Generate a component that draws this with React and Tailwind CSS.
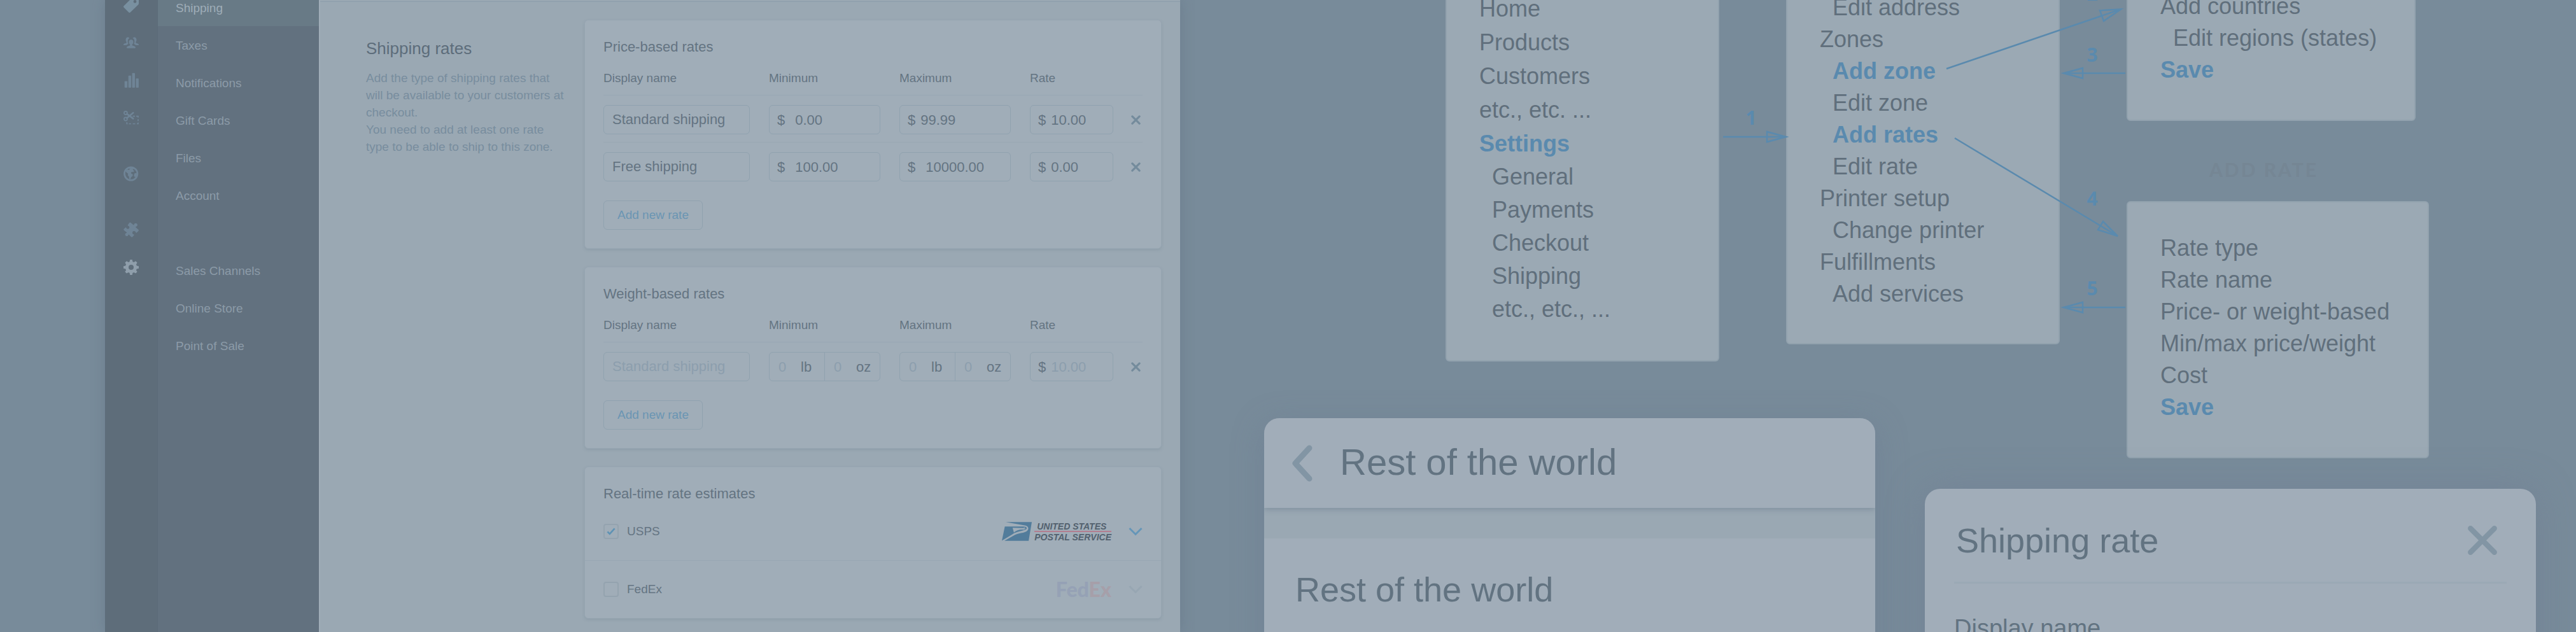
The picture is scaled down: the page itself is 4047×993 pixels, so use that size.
import React from "react";

const SANS = "font-['Liberation_Sans',Arial,sans-serif]";

function TagIcon() {
  return (
    <svg viewBox="0 0 24 24" className="size-6" fill="currentColor" aria-hidden="true">
      <path
        fillRule="evenodd"
        d="M15 0h7.5A1.5 1.5 0 0 1 24 1.500V9.500c0 .8-.3 1.500-.9 2L10.600 23.500c-.7.7-1.600.7-2.200 0L.6 15.700c-.8-.8-.8-1.700 0-2.400L13 1c.5-.6 1.200-1 2-1Zm3 4a2.400 2.400 0 1 0 0 4.800A2.400 2.400 0 0 0 18 4Z"
      />
    </svg>
  );
}

function UsersIcon() {
  return (
    <svg viewBox="0 0 24 24" className="size-6" fill="currentColor" aria-hidden="true">
      <path d="M12 7.300c2.100 0 3.500 1.600 3.500 3.700 0 1.700-.8 3.200-1.900 4v1c.3.900 5.400 1.400 5.400 3.600 0 .7-.5 1.100-1.200 1.100H6.200c-.7 0-1.200-.4-1.200-1.100 0-2.200 5.100-2.700 5.400-3.600v-1c-1.100-.8-1.900-2.300-1.900-4 0-2.100 1.400-3.700 3.500-3.700Z" />
      <path d="M6.800 3.500c1.200 0 2.200.6 2.700 1.600-1.900.9-2.900 2.700-2.800 5.300 0 1.300.4 2.500 1 3.500-1.300.8-2.300 1.100-3.200 2.200H1c-.6 0-1-.4-1-1 0-1.900 4.300-2.200 4.700-3.200v-.8C4 10.400 3.500 9.100 3.500 7.600c0-2.300 1.300-4.100 3.300-4.100ZM17.200 3.500c2 0 3.300 1.800 3.300 4.100 0 1.500-.5 2.800-1.200 3.500v.8c.4 1 4.700 1.300 4.700 3.200 0 .6-.4 1-1 1h-3.500c-.9-1.100-1.900-1.400-3.200-2.200.6-1 1-2.200 1-3.500.1-2.600-.9-4.400-2.800-5.300.5-1 1.500-1.600 2.700-1.600Z" />
    </svg>
  );
}

function BarsIcon() {
  return (
    <svg viewBox="0 0 24 24" className="size-6" fill="currentColor" aria-hidden="true">
      <rect x="1.700" y="13.500" width="4.400" height="10.300" rx="0.800" />
      <rect x="7.700" y="4.800" width="4.400" height="19" rx="0.800" />
      <rect x="13.600" y="0.800" width="4.400" height="23" rx="0.800" />
      <rect x="19.500" y="9.200" width="4.400" height="14.600" rx="0.800" />
    </svg>
  );
}

function ScissorsIcon() {
  return (
    <svg viewBox="0 0 24 24" className="size-6" fill="none" stroke="currentColor" aria-hidden="true">
      <circle cx="3.400" cy="4.500" r="2.500" strokeWidth="1.800" />
      <circle cx="3.400" cy="14" r="2.500" strokeWidth="1.800" />
      <path d="M5.400 6l9.800 7.400M5.400 12.500 15.200 4.200" strokeWidth="2.700" strokeLinecap="round" />
      <path d="M14.500 9.600h3.500M20 9.600h3v2.200M23 14.300v3M23 19.500v2h-2M18.500 21.500h-4M12 21.500H8.500M6.500 21.500H5.300V19" strokeWidth="1.700" />
    </svg>
  );
}

function GlobeIcon() {
  return (
    <svg viewBox="0 0 24 24" className="size-6" aria-hidden="true">
      <circle cx="11.700" cy="12" r="10.200" fill="none" stroke="currentColor" strokeWidth="2.700" />
      <path
        fill="currentColor"
        d="M8.500 3.500l5.500-.7 2 1.400-1.600 1.600 2.600 1.800-1.500 1.600-2.300-.3-1.600 1.600 1 1.500 2.200.9-.5 2.700-2.300 1.900-1.300 3.500-1.700-1.200-.4-3.200-1.900-2.400.6-2.200L4 9.200l-.9-1.400 2.500-2.600 3 .7 1.400-1.100ZM17.200 11.600l3-.9 1.200 1.600-1.500 3.800-1.900 1.300-1.700-2.300Z"
      />
    </svg>
  );
}

function PuzzleIcon() {
  return (
    <svg viewBox="0 0 24 24" className="size-6" fill="currentColor" aria-hidden="true">
      <path d="M9.200 1c.7-.7 1.700-.7 2.400 0l3.700 3.300c.7.400 1.100.2 1.300-.5.300-1.400 1.300-2.200 2.600-2.100 1.600.1 2.700 1.300 2.700 2.800 0 1.300-.8 2.200-2.100 2.500-.7.200-.9.700-.5 1.200l4 3.500c.9.700.9 1.500.1 2.200l-2.600 2.500c-.6.600-1.300.4-1.600-.4-.4-1.300-1.400-2-2.700-1.900-1.500.1-2.500 1.200-2.500 2.600 0 1.300.7 2.200 2 2.500.9.300 1 .9.400 1.500l-2 2.300c-.7.900-1.700.9-2.500.1l-3.200-3.300c-.5-.4-1-.2-1.200.5-.3 1.200-1.100 1.900-2.300 1.800-1.500 0-2.600-1.100-2.600-2.600 0-1.200.7-2 1.900-2.300.7-.2.800-.7.400-1.200L.9 12.900c-.8-.8-.8-1.600 0-2.300l2-1.900c.6-.6 1.200-.4 1.500.4.400 1.200 1.300 1.800 2.500 1.700 1.500-.1 2.400-1.100 2.400-2.500 0-1.200-.7-2.100-1.900-2.500-.9-.3-1-.9-.4-1.500Z" />
    </svg>
  );
}

function GearIcon() {
  return (
    <svg viewBox="0 0 24 24" className="size-6" fill="currentColor" aria-hidden="true">
      <path
        fillRule="evenodd"
        d="M10.300 0h3.400l.7 3.200 2 .8 2.700-1.700 2.500 2.500L19.900 7.600l.9 2 3.200.7v3.400l-3.200.7-.9 2 1.700 2.700-2.500 2.500-2.700-1.700-2 .9-.7 3.200h-3.400l-.7-3.200-2-.9-2.700 1.700-2.500-2.500 1.700-2.700-.9-2-3.200-.7v-3.400l3.200-.7.900-2L2.400 4.800l2.500-2.500L7.600 4l2-.8ZM12 8a4 4 0 1 0 0 8 4 4 0 0 0 0-8Z"
      />
    </svg>
  );
}

function CloseIcon({ className, width }) {
  return (
    <svg viewBox="0 0 24 24" className={className} fill="none" stroke="currentColor" strokeWidth={width} strokeLinecap="round" aria-hidden="true">
      <path d="M3 3l18 18M21 3 3 21" />
    </svg>
  );
}

function ChevronIcon() {
  return (
    <svg viewBox="0 0 22 14" className="h-[14px] w-[22px]" fill="none" stroke="currentColor" strokeWidth="3" aria-hidden="true">
      <path d="M1.500 2 11 11.500 20.500 2" />
    </svg>
  );
}

function UspsLogo() {
  return (
    <div className="flex items-center gap-1" role="img" aria-label="United States Postal Service">
      <svg viewBox="0 0 142 89" className="h-[30px] w-[47px]" aria-hidden="true">
        <path fill="#527c9b" d="M18 0H142L127 89H12L60 62C88 48 119 54 125 34 128 20 116 17 104 15Z" />
        <path fill="#527c9b" d="M14 21H104C118 22 122 29 114 35 96 44 70 44 50 58L0 88Z" />
        <path fill="#a0adb8" d="M51 27L57 50C68 40 84 34 104 36L109 29Z" />
        <path fill="none" stroke="#a0adb8" strokeWidth="3" d="M104 26c8 0 8 8 0 8" />
      </svg>
      <div className="flex flex-col text-[14px] leading-[14px] font-bold whitespace-nowrap text-[#53616e] italic">
        <span className="border-b-2 border-[#b27e90] pl-1">UNITED STATES</span>
        <span className="pt-px">POSTAL SERVICE</span>
      </div>
    </div>
  );
}

const railGroups = [
  [
    ["Products", TagIcon, "text-[#7990a0]"],
    ["Customers", UsersIcon, "text-[#6f8496]"],
    ["Reports", BarsIcon, "text-[#6f8496]"],
    ["Discounts", ScissorsIcon, "text-[#6f8496]"],
  ],
  [["Online store", GlobeIcon, "text-[#6f8496]"]],
  [
    ["Apps", PuzzleIcon, "text-[#6f8496]"],
    ["Settings", GearIcon, "text-[#8f9eab]"],
  ],
];

const navGroups = [
  ["Shipping", "Taxes", "Notifications", "Gift Cards", "Files", "Account"],
  ["Sales Channels", "Online Store", "Point of Sale"],
];

function Sidebar() {
  return (
    <div className="flex shrink-0">
      <nav aria-label="Sections" className="-mt-[22px] flex w-[82px] flex-col gap-[29px] bg-[#5e6d7a]">
        {railGroups.map((group, i) => (
          <ul key={i}>
            {group.map(([name, Icon, color]) => (
              <li key={name}>
                <a href="#" aria-label={name} className={`flex h-[59px] items-center justify-center ${color}`}>
                  <Icon />
                </a>
              </li>
            ))}
          </ul>
        ))}
      </nav>
      <nav aria-label="Settings" className="-mt-[18px] flex w-[254px] flex-col gap-[59px] border-l border-[#5c6b78] bg-[#62717f]">
        {navGroups.map((group, i) => (
          <ul key={i}>
            {group.map((name) => (
              <li key={name}>
                <a
                  href="#"
                  className={`flex h-[59px] items-center pt-0.5 pl-7 text-[19px] leading-6 ${
                    name === "Shipping" ? "bg-[#687a86] text-[#9fadb8]" : "text-[#8c9ba8]"
                  }`}
                >
                  {name}
                </a>
              </li>
            ))}
          </ul>
        ))}
      </nav>
    </div>
  );
}

const FIELD = "flex h-[46px] items-center rounded-md border border-[#90a2af]";

function MoneyField({ label, value, placeholder, gap }) {
  return (
    <label className={`${FIELD} ${gap} pl-3 text-[22px]`}>
      <span>$</span>
      <input
        aria-label={label}
        defaultValue={value}
        placeholder={placeholder}
        className="w-full min-w-0 bg-transparent outline-none placeholder:text-[#8c9ead]"
      />
    </label>
  );
}

function WeightField({ label }) {
  return (
    <div className={`${FIELD} text-[22px]`}>
      {["lb", "oz"].map((unit) => (
        <label
          key={unit}
          className="flex h-full flex-1 items-center border-[#90a2af] pl-[14px] last:border-l"
        >
          <input
            aria-label={`${label} ${unit}`}
            placeholder="0"
            className="w-[35px] min-w-0 bg-transparent outline-none placeholder:text-[#8c9ead]"
          />
          <span>{unit}</span>
        </label>
      ))}
    </div>
  );
}

function Card({ title, children }) {
  return (
    <section className="rounded-md border border-[#96a5b1] bg-[#a0adb8] pt-[28px] shadow-[0_2px_4px_rgba(90,110,128,0.18)]">
      <h2 className="px-[29px] text-[22px] leading-7">{title}</h2>
      {children}
    </section>
  );
}

function RatesTable({ children }) {
  return (
    <div className="px-[29px] pt-[23px] pb-[29px]">
      <table className="w-full table-fixed border-collapse text-left">
        <colgroup>
          <col className="w-[260px]" />
          <col className="w-[205px]" />
          <col className="w-[205px]" />
          <col className="w-[131px]" />
          <col />
        </colgroup>
        <thead className="text-[19px] leading-6">
          <tr>
            {["Display name", "Minimum", "Maximum", "Rate"].map((name) => (
              <th key={name} scope="col" className="p-0 pb-[14px] font-normal">
                {name}
              </th>
            ))}
            <td />
          </tr>
        </thead>
        <tbody>{children}</tbody>
      </table>
      <button
        type="button"
        className="mt-[18px] block h-[46px] rounded-md border border-[#90a2af] px-[21px] text-[19px] text-[#6a95b3]"
      >
        Add new rate
      </button>
    </div>
  );
}

function RateRow({ name, placeholder, minimum, maximum, rate }) {
  return (
    <tr className="border-t border-[#98a7b3]">
      <td className="pt-[15px] pr-[30px] pb-3">
        <input
          aria-label="Display name"
          defaultValue={name}
          placeholder={placeholder}
          className={`${FIELD} w-full pl-[13px] text-[22px] outline-none placeholder:text-[#8c9ead]`}
        />
      </td>
      <td className="pt-[15px] pr-[30px] pb-3">{minimum}</td>
      <td className="pt-[15px] pr-[30px] pb-3">{maximum}</td>
      <td className="pt-[15px] pb-3">{rate}</td>
      <td className="pt-[15px] pr-[3px] pb-3">
        <button type="button" aria-label="Remove rate" className="ml-auto block text-[#748b9c]">
          <CloseIcon className="size-[15px]" width="5" />
        </button>
      </td>
    </tr>
  );
}

function Carrier({ name, checked, children, chevron }) {
  return (
    <div className="flex items-center px-[29px] py-[30px]">
      <label className="flex items-center gap-[13px] text-[19px] leading-6">
        <span className="grid size-6 place-items-center">
          <input
            type="checkbox"
            defaultChecked={checked}
            className="peer col-start-1 row-start-1 size-6 appearance-none rounded-sm border-2 border-[#94a3af]"
          />
          <svg
            viewBox="0 0 16 14"
            className="pointer-events-none col-start-1 row-start-1 hidden h-3 w-4 text-[#5e92b4] peer-checked:block"
            fill="none"
            stroke="currentColor"
            strokeWidth="3"
            aria-hidden="true"
          >
            <path d="M1.500 7.500 5.500 11.500 14.500 1.500" />
          </svg>
        </span>
        {name}
      </label>
      <div className="ml-auto flex h-[30px] items-center">{children}</div>
      <button type="button" aria-label={`Show ${name} options`} className={`ml-[27px] ${chevron}`}>
        <ChevronIcon />
      </button>
    </div>
  );
}

function RatesPage() {
  return (
    <main className="min-w-0 flex-[1353] border-l-2 border-[#a0adb8] bg-[#9aa8b3] text-[#647482]">
      <div className="h-[3px] border-b border-[#8b9cab]" />
      <div className="flex pt-[28px] pr-[29px] pb-5 pl-[72px]">
        <div className="w-[343px] shrink-0 pt-[29px] pr-[26px]">
          <h1 className="text-[26px] leading-8 text-[#5d6d7b]">Shipping rates</h1>
          <div className="pt-[17px] text-[19px] leading-[27px] text-[#788d9e]">
            <p>Add the type of shipping rates that will be available to your customers at checkout.</p>
            <p>You need to add at least one rate type to be able to ship to this zone.</p>
          </div>
        </div>
        <div className="flex min-w-0 flex-1 flex-col gap-7">
          <Card title="Price-based rates">
            <RatesTable>
              <RateRow
                name="Standard shipping"
                minimum={<MoneyField label="Minimum price" value="0.00" gap="gap-4" />}
                maximum={<MoneyField label="Maximum price" value="99.99" gap="gap-2" />}
                rate={<MoneyField label="Rate" value="10.00" gap="gap-2" />}
              />
              <RateRow
                name="Free shipping"
                minimum={<MoneyField label="Minimum price" value="100.00" gap="gap-4" />}
                maximum={<MoneyField label="Maximum price" value="10000.00" gap="gap-4" />}
                rate={<MoneyField label="Rate" value="0.00" gap="gap-2" />}
              />
            </RatesTable>
          </Card>
          <Card title="Weight-based rates">
            <RatesTable>
              <RateRow
                placeholder="Standard shipping"
                minimum={<WeightField label="Minimum weight" />}
                maximum={<WeightField label="Maximum weight" />}
                rate={<MoneyField label="Rate" placeholder="10.00" gap="gap-2" />}
              />
            </RatesTable>
          </Card>
          <Card title="Real-time rate estimates">
            <Carrier name="USPS" checked chevron="text-[#6596b8]">
              <UspsLogo />
            </Carrier>
            <div className="border-t border-[#98a7b3]">
              <Carrier name="FedEx" chevron="text-[#97a6b2]">
                <span className="font-['Lato',sans-serif] text-[32px] leading-[30px] font-black" role="img" aria-label="FedEx logo">
                  <span className="text-[#95a1b5]">Fed</span>
                  <span className="text-[#a69fa9]">Ex</span>
                </span>
              </Carrier>
            </div>
          </Card>
        </div>
      </div>
    </main>
  );
}

function Node({ place, leading, children }) {
  return (
    <section
      className={`absolute rounded-md border-2 border-[#92a2ae] bg-[#9ba9b4] pl-[51px] text-[36px] whitespace-nowrap text-[#606f7c] ${place} ${leading}`}
    >
      {children}
    </section>
  );
}

function Items({ names, className = "" }) {
  return (
    <ul className={className}>
      {names.map((name) => {
        const strong = ["Settings", "Add zone", "Add rates", "Save"].includes(name);
        return (
          <li key={name} className={strong ? "font-bold text-[#5a8aae]" : ""}>
            {name}
          </li>
        );
      })}
    </ul>
  );
}

function Arrows() {
  return (
    <svg
      className="pointer-events-none absolute top-0 left-0 h-full w-full overflow-visible text-[#5a8aae]"
      fill="none"
      stroke="currentColor"
      strokeWidth="2.500"
      aria-hidden="true"
    >
      <path d="M853 215H952M922 207V223L952 215Z" />
      <path d="M1204 108 1478 14.500M1445 16.500 1451 33 1478 14.500Z" />
      <path d="M1485 115H1388M1418 107V123L1388 115Z" />
      <path d="M1217 217 1473 371M1450 348 1442 361 1473 371Z" />
      <path d="M1485 483H1388M1418 475V491L1388 483Z" />
    </svg>
  );
}

function Step({ place, children }) {
  return (
    <span
      className={`absolute w-6 text-center font-['Open_Sans',sans-serif] text-[30px] leading-10 font-bold text-[#5a8aae] ${place}`}
    >
      {children}
    </span>
  );
}

function FlowCanvas() {
  return (
    <div className="relative min-w-0 flex-[2193] overflow-hidden">
      <Node place="left-[417px] top-[-40px] w-[430px] pt-[25px] pb-[54px]" leading="leading-[53px]">
        <Items names={["Home", "Products", "Customers", "etc., etc. ...", "Settings"]} />
        <Items
          className="pl-5 leading-[52px]"
          names={["General", "Payments", "Checkout", "Shipping", "etc., etc., ..."]}
        />
      </Node>
      <Node place="left-[952px] top-[-40px] w-[430px] pt-[25px] pb-[52px]" leading="leading-[50px]">
        <Items className="pl-5" names={["Edit address"]} />
        <Items names={["Zones"]} />
        <Items className="pl-5" names={["Add zone", "Edit zone", "Add rates", "Edit rate"]} />
        <Items names={["Printer setup"]} />
        <Items className="pl-5" names={["Change printer"]} />
        <Items names={["Fulfillments"]} />
        <Items className="pl-5" names={["Add services"]} />
      </Node>
      <Node place="left-[1487px] top-[-42px] w-[454px] pt-[25px] pb-[53px]" leading="leading-[50px]">
        <Items names={["Add countries"]} />
        <Items className="pl-5" names={["Edit regions (states)"]} />
        <Items names={["Save"]} />
      </Node>
      <h2 className="absolute top-[246px] left-[1487px] w-[454px] pl-[130px] font-['Lato',sans-serif] text-[30px] leading-10 font-bold tracking-widest text-[#758694]">
        ADD RATE
      </h2>
      <Node place="left-[1487px] top-[316px] w-[475px] pt-[47px] pb-[53px]" leading="leading-[50px]">
        <Items
          names={["Rate type", "Rate name", "Price- or weight-based", "Min/max price/weight", "Cost", "Save"]}
        />
      </Node>

      <Arrows />
      <Step place="left-[885px] top-[165px]">1</Step>
      <Step place="left-[1421px] top-[-30px]">2</Step>
      <Step place="left-[1421px] top-[66px]">3</Step>
      <Step place="left-[1421px] top-[292px]">4</Step>
      <Step place="left-[1421px] top-[433px]">5</Step>

      <section className="absolute top-[657px] left-[132px] w-[960px] overflow-hidden rounded-t-3xl bg-[#9aa8b3] text-[#627381] shadow-[0_10px_50px_rgba(100,115,140,0.35)]">
        <header className="relative flex h-[141px] items-center bg-[#a1adb9] pl-[42px] shadow-[0_3px_8px_rgba(90,110,128,0.35)]">
          <button type="button" aria-label="Back" className="text-[#8295a4]">
            <svg viewBox="0 0 34 58" className="h-[58px] w-[34px]" fill="none" stroke="currentColor" strokeWidth="9" strokeLinecap="round" strokeLinejoin="round" aria-hidden="true">
              <path d="M29 5 7 29l22 24" />
            </svg>
          </button>
          <h2 className="pb-1 pl-[43px] text-[58px] leading-[66px]">Rest of the world</h2>
        </header>
        <div className="mt-12 bg-[#a1adb9] px-[49px] pt-[50px] pb-20">
          <h3 className="text-[54px] leading-[60px]">Rest of the world</h3>
        </div>
      </section>

      <section className="absolute top-[768px] left-[1170px] w-[960px] rounded-t-3xl bg-[#a1adb9] px-[46px] text-[#627381] shadow-[0_0_60px_rgba(110,120,145,0.4)]">
        <header className="flex h-[149px] items-center justify-between border-b-[3px] border-[#9ba9b5] pt-4 pr-[13px] pl-[3px]">
          <h2 className="text-[54px] leading-[60px]">Shipping rate</h2>
          <button type="button" aria-label="Close" className="text-[#8295a4]">
            <CloseIcon className="size-[50px]" width="4" />
          </button>
        </header>
        <label className="block pt-[48px] pb-10 text-[38px] leading-[44px]">
          Display name
          <input className="mt-4 block h-20 w-full rounded-lg border-2 border-[#90a2af]" />
        </label>
      </section>
    </div>
  );
}

export default function App() {
  return (
    <div className={`flex min-h-screen overflow-hidden bg-[#788b9a] pl-[165px] ${SANS}`}>
      <div className="flex min-w-0 flex-[1689] shadow-[0_0_20px_rgba(85,100,120,0.35)]">
        <Sidebar />
        <RatesPage />
      </div>
      <FlowCanvas />
    </div>
  );
}
